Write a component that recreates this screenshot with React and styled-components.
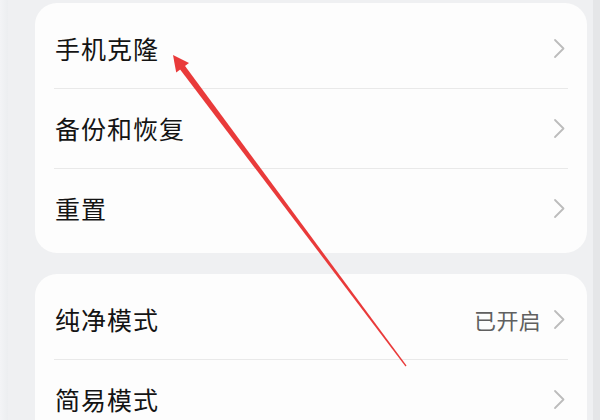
import React from "react";
import styled, { createGlobalStyle } from "styled-components";

const GlobalStyle = createGlobalStyle`
  html, body {
    margin: 0;
    padding: 0;
    background: #eff0f2;
    font-family: "Noto Sans CJK SC", "Noto Sans", sans-serif;
  }
`;

const Screen = styled.div`
  position: relative;
  width: 600px;
  height: 420px;
  overflow: hidden;
  display: flex;
  background: #eff0f2;
`;

const LeftEdge = styled.div`
  width: 8px;
  flex: none;
  background: linear-gradient(to right, #f3f4f6, #eceef0);
`;

const Content = styled.div`
  flex: 1;
  display: flex;
  flex-direction: column;
  gap: 21px;
  padding: 3px 6px 0 27px;
`;

const RightEdge = styled.div`
  width: 7px;
  flex: none;
  background: #e5e6e8;
`;

const Card = styled.div`
  background: #fdfdfd;
  border-radius: 22px;
  padding: 6px 0 5px;
  flex: none;
`;

const Row = styled.div`
  height: 79px;
  display: flex;
  align-items: center;
  padding: 0 21px 0 20px;
`;

const Label = styled.span`
  flex: 1;
  font-size: 25px;
  letter-spacing: 1px;
  font-weight: 400;
  color: #141414;
  margin-top: -2px;
`;

const Value = styled.span`
  font-size: 22px;
  color: #606060;
  margin-right: 12px;
  letter-spacing: 0.3px;
  margin-top: -2px;
`;

const Divider = styled.div`
  height: 1px;
  margin: 0 19px;
  background: #e9e9e9;
`;

const ArrowLayer = styled.svg`
  position: absolute;
  left: 0;
  top: 0;
  pointer-events: none;
`;

const Chevron = () => (
  <svg width="13" height="21" viewBox="0 0 13 21">
    <polyline
      points="2,2 10.5,10.5 2,19"
      fill="none"
      stroke="#bcbcbc"
      strokeWidth="1.8"
      strokeLinecap="round"
      strokeLinejoin="round"
    />
  </svg>
);

const Item = ({ label, value }) => (
  <Row>
    <Label>{label}</Label>
    {value && <Value>{value}</Value>}
    <Chevron />
  </Row>
);

const groups = [
  [{ label: "手机克隆" }, { label: "备份和恢复" }, { label: "重置" }],
  [{ label: "纯净模式", value: "已开启" }, { label: "简易模式" }],
];

export default function App() {
  return (
    <>
      <GlobalStyle />
      <Screen>
        <LeftEdge />
        <Content>
          {groups.map((items, gi) => (
            <Card key={gi}>
              {items.map((it, i) => (
                <React.Fragment key={it.label}>
                  {i > 0 && <Divider />}
                  <Item {...it} />
                </React.Fragment>
              ))}
            </Card>
          ))}
        </Content>
        <RightEdge />
        <ArrowLayer width="600" height="420" viewBox="0 0 600 420">
          <polygon
            points="178.4,67.2 183.2,63.6 406.5,365.6 405.5,366.4"
            fill="#e93a3a"
          />
          <polygon points="173,55 189,63 176.2,72.6" fill="#e93a3a" />
        </ArrowLayer>
      </Screen>
    </>
  );
}
